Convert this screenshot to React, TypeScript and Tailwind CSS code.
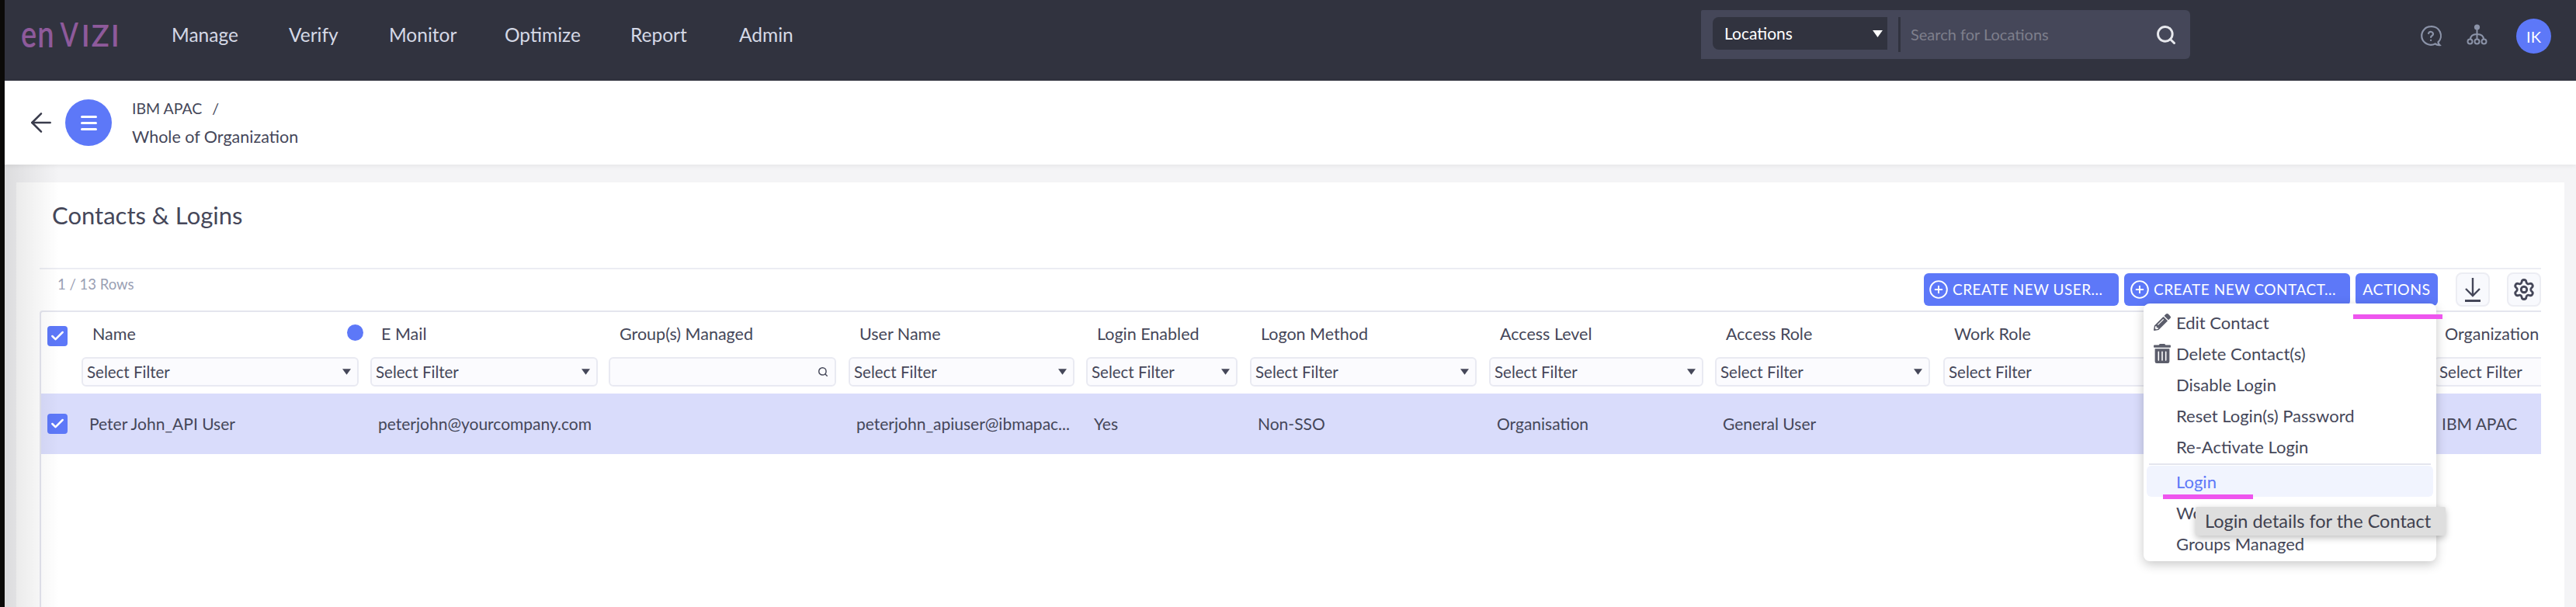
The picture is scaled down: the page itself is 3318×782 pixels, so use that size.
import { ArrowLeft, Check, CirclePlus, Search, Settings } from 'lucide-react';
import { FaPencilAlt, FaTrashAlt } from 'react-icons/fa';

const font = "font-['Lato','Noto_Sans',sans-serif]";

const columns = [
  { label: 'Name', value: 'Peter John_API User', cell: 'w-[372px]', filter: 'w-[357px]' },
  { label: 'E Mail', value: 'peterjohn@yourcompany.com', cell: 'w-[307px]', filter: 'w-[293px]' },
  { label: 'Group(s) Managed', value: '', cell: 'w-[309px]', filter: 'w-[293px]', search: true },
  { label: 'User Name', value: 'peterjohn_apiuser@ibmapac...', cell: 'w-[306px]', filter: 'w-[291px]' },
  { label: 'Login Enabled', value: 'Yes', cell: 'w-[211px]', filter: 'w-[195px]' },
  { label: 'Logon Method', value: 'Non-SSO', cell: 'w-[308px]', filter: 'w-[292px]' },
  { label: 'Access Level', value: 'Organisation', cell: 'w-[291px]', filter: 'w-[276px]' },
  { label: 'Access Role', value: 'General User', cell: 'w-[294px]', filter: 'w-[277px]' },
  { label: 'Work Role', value: '', cell: 'w-[632px]', filter: 'w-[610px]' },
  { label: 'Organization', value: 'IBM APAC', cell: 'w-[138px]', filter: 'w-[138px]', open: true },
];

const navItems = [
  { label: 'Manage', cls: 'w-[151px]' },
  { label: 'Verify', cls: 'w-[129px]' },
  { label: 'Monitor', cls: 'w-[149px]' },
  { label: 'Optimize', cls: 'w-[162px]' },
  { label: 'Report', cls: 'w-[140px]' },
  { label: 'Admin', cls: 'w-[80px]' },
];

function Checkbox() {
  return (
    <span className="flex h-[26px] w-[26px] items-center justify-center rounded-[4px] bg-[#5d78f8]">
      <Check className="h-[20px] w-[20px] text-white" strokeWidth={3} />
    </span>
  );
}

function Caret({ className }: { className: string }) {
  return (
    <svg viewBox="0 0 10 7" className={className}>
      <path d="M0 0h10L5 7z" fill="currentColor" />
    </svg>
  );
}

// speech bubble with question mark, tail sits bottom right
function HelpIcon() {
  return (
    <svg viewBox="0 0 29 29" className="h-[29px] w-[29px] text-[#8b93a8]" fill="none" stroke="currentColor" strokeWidth="2.2" strokeLinecap="round">
      <path d="M14 2.2a11.8 11.8 0 1 0 0 23.6c2.2 0 4-.5 5.6-1.4 1.4 1.2 3 1.9 5.8 1.7-1-1-1.8-2.2-2-3.7a11.8 11.8 0 0 0-9.4-20.2z" />
      <path d="M11 11a3.1 3.1 0 0 1 6 .9c0 2-2.9 2.4-2.9 4" />
      <path d="M14.1 19.8v.1" />
    </svg>
  );
}

// org chart glyph next to the help icon
function OrgIcon() {
  return (
    <svg viewBox="0 0 27 27" className="h-[27px] w-[27px] text-[#8b93a8]" fill="none" stroke="currentColor" strokeWidth="2">
      <circle cx="13.5" cy="4" r="3.6" fill="currentColor" stroke="none" />
      <path d="M13.5 6v14M13.5 13c-6 0-8.500 2.500-8.500 7M13.500 13c6 0 8.500 2.500 8.500 7" />
      <circle cx="4.500" cy="22.500" r="3" />
      <circle cx="13.500" cy="22.500" r="3" />
      <circle cx="22.500" cy="22.500" r="3" />
    </svg>
  );
}

function DownloadIcon() {
  return (
    <svg viewBox="0 0 24 32" className="h-[32px] w-[24px] text-[#454759]" fill="none" stroke="currentColor" strokeWidth="2.4">
      <path d="M12 1v23M3 15l9 9 9-9" />
      <path d="M2 30.500h20" strokeWidth="3" />
    </svg>
  );
}

function MenuRow({ label, icon, hover }: { label: string; icon?: React.ReactNode; hover?: boolean }) {
  return (
    <div className={`mx-[4px] flex h-[40px] items-center rounded-[6px] ${hover ? 'bg-[#f1f4fe] text-[#5d78f8]' : 'text-[#454759]'}`}>
      <span className="flex w-[38px] justify-center pl-[2px]">{icon}</span>
      <span>{label}</span>
    </div>
  );
}

export default function App() {
  return (
    <div className={`relative flex h-[782px] w-[3318px] overflow-hidden bg-[#0b0a08] ${font}`}>
      <div className="ml-[6px] flex min-w-0 flex-1 flex-col bg-[#f4f4f6]">
        {/* top nav */}
        <div className="flex h-[104px] shrink-0 items-start bg-[#31333f]">
          <div className="mt-[20px] ml-[21px] flex h-[50px] w-[194px] items-baseline text-[38px] leading-[50px] font-semibold text-[#8e5a9b]">
            <span className="inline-block origin-[0_38px] scale-y-125 tracking-[1px]">en</span>
            <span className="ml-[7px] inline-block origin-[0_38px] scale-y-125 text-[34px]">V</span>
            <span className="ml-[4px] tracking-[2px]">IZI</span>
          </div>
          <div className="mt-[31px] flex text-[24.5px] leading-[28px] text-[#d5d9e6]">
            {navItems.map((n) => (
              <span key={n.label} className={n.cls}>
                {n.label}
              </span>
            ))}
          </div>
          <div className="mt-[13px] ml-[1159px] flex h-[63px] w-[630px] items-start rounded-r-[6px] rounded-tl-[2px] bg-[#454759] pt-[9px] pl-[15px]">
            <div className="flex h-[42px] w-[225px] items-center justify-between rounded-l-[8px] bg-[#31333f] pr-[6px] pl-[15px] text-[21px] text-white">
              Locations
              <Caret className="h-[9px] w-[13px]" />
            </div>
            <div className="ml-[14px] h-[45px] w-[3px] bg-[#31333f]" />
            <span className="mt-[9px] ml-[13px] w-[315px] text-[20px] leading-[26px] text-[#7e7f8c]">Search for Locations</span>
            <Search className="mt-[9px] h-[28px] w-[28px] text-[#e8e9ee]" strokeWidth={2.5} />
          </div>
          <div className="mt-[32px] ml-[296px]">
            <HelpIcon />
          </div>
          <div className="mt-[31px] ml-[31px]">
            <OrgIcon />
          </div>
          <div className="mt-[24px] ml-[37px] flex h-[45px] w-[45px] items-center justify-center rounded-full bg-[#5d78f8] text-[20px] text-white">
            IK
          </div>
        </div>

        {/* breadcrumb */}
        <div className="z-10 flex h-[108px] shrink-0 items-center bg-white pl-[27px] shadow-[0_2px_6px_rgba(0,0,0,0.06)]">
          <ArrowLeft className="h-[40px] w-[40px] text-[#3a3c4c]" strokeWidth={1.5} />
          <span className="ml-[11px] flex h-[60px] w-[60px] flex-col items-center justify-center gap-[5px] rounded-full bg-[#5d78f8]">
            <span className="h-[3px] w-[21px] rounded-full bg-white" />
            <span className="h-[3px] w-[21px] rounded-full bg-white" />
            <span className="h-[3px] w-[21px] rounded-full bg-white" />
          </span>
          <div className="ml-[26px] flex flex-col gap-[14px] text-[21.500px] leading-[23px] text-[#454759]">
            <span className="text-[19.500px]">
              IBM APAC <span className="ml-[8px]">/</span>
            </span>
            <span>Whole of Organization</span>
          </div>
        </div>

        {/* content card */}
        <div className="min-h-0 flex-1 pt-[23px] pr-[15px] pl-[15px]">
          <div className="h-full bg-white pt-[24px] pl-[30px]">
            <h1 className="pl-[16px] text-[31px] leading-[36px] font-normal text-[#454759]">Contacts &amp; Logins</h1>
            <div className="mt-[50px] flex h-[55px] w-[3222px] items-start border-t-2 border-[#ecedf3]">
              <span className="mt-[8px] pl-[23px] text-[18.500px] leading-[22px] text-[#9aa0b4]">1 / 13 Rows</span>
              <div className="ml-auto flex pt-[5px]">
                <button className="flex h-[42px] w-[251px] items-center gap-[5px] rounded-[6px] bg-[#5d78f8] pl-[6px] text-[19px] tracking-[0.5px] text-white">
                  <CirclePlus className="h-[26px] w-[26px]" strokeWidth={1.75} />
                  CREATE NEW USER...
                </button>
                <button className="ml-[7px] flex h-[42px] w-[291px] items-center gap-[5px] rounded-[6px] bg-[#5d78f8] pl-[7px] text-[19px] tracking-[0.5px] text-white">
                  <CirclePlus className="h-[26px] w-[26px]" strokeWidth={1.75} />
                  CREATE NEW CONTACT...
                </button>
                <button className="ml-[7px] h-[42px] w-[106px] rounded-[6px] bg-[#5d78f8] text-[19.500px] tracking-[0.5px] text-white">ACTIONS</button>
                <span className="-mt-[1px] ml-[23px] flex h-[44px] w-[44px] items-center justify-center rounded-[8px] border-2 border-[#ecedf3] bg-[#f8f9fd]">
                  <DownloadIcon />
                </span>
                <span className="-mt-[1px] ml-[22px] flex h-[44px] w-[44px] items-center justify-center rounded-[8px] border-2 border-[#ecedf3] bg-[#f8f9fd]">
                  <Settings className="h-[30px] w-[30px] text-[#454759]" strokeWidth={2.25} />
                </span>
              </div>
            </div>

            {/* grid */}
            <div className="h-[500px] w-[3222px] rounded-tl-[4px] border-t-2 border-l-2 border-[#e4e5ee] text-[21px] text-[#454759]">
              <div className="flex h-[105px]">
                <div className="w-[52px] pt-[18px] pl-[8px]">
                  <Checkbox />
                </div>
                {columns.map((c) => (
                  <div key={c.label} className={`flex flex-col ${c.cell}`}>
                    <div className="flex h-[58px] items-start pt-[15px] pl-[14px] text-[21.500px] leading-[26px]">
                      {c.label}
                      {c.label === 'Name' && <span className="mt-[1px] mr-[9px] ml-auto h-[21px] w-[21px] rounded-full bg-[#5d78f8]" />}
                    </div>
                    <div
                      className={`flex h-[38px] items-center justify-between border-2 border-[#e9eaf2] bg-[#fbfbfe] pr-[8px] pl-[5px] text-[20.500px] ${c.filter} ${
                        c.open ? 'rounded-l-[6px] border-r-0' : 'rounded-[6px]'
                      }`}
                    >
                      {!c.search && <span>Select Filter</span>}
                      {c.search ? (
                        <Search className="ml-auto h-[14px] w-[14px] text-[#454759]" strokeWidth={2.5} />
                      ) : (
                        !c.open && <Caret className="h-[8px] w-[11px] text-[#454759]" />
                      )}
                    </div>
                  </div>
                ))}
              </div>
              <div className="flex h-[78px] items-center bg-[#d9dcfb]">
                <div className="w-[52px] pl-[8px]">
                  <Checkbox />
                </div>
                {columns.map((c) => (
                  <div key={c.label} className={`truncate pl-[10px] ${c.cell}`}>
                    {c.value}
                  </div>
                ))}
              </div>
            </div>
          </div>
        </div>
      </div>

      {/* soft shadow falling off the left edge */}
      <div className="pointer-events-none absolute top-[104px] bottom-0 left-[6px] w-[70px] bg-gradient-to-r from-black/10 to-transparent" />

      {/* actions dropdown */}
      <div className="absolute top-[391px] left-[2761px] h-[332px] w-[377px] rounded-[8px] bg-white pt-[4px] text-[22px] shadow-[0_4px_14px_rgba(0,0,0,0.22)]">
        <MenuRow label="Edit Contact" icon={<FaPencilAlt className="h-[22px] w-[22px] text-[#5b5d6b]" />} />
        <MenuRow label="Delete Contact(s)" icon={<FaTrashAlt className="h-[25px] w-[22px] text-[#5b5d6b]" />} />
        <MenuRow label="Disable Login" />
        <MenuRow label="Reset Login(s) Password" />
        <MenuRow label="Re-Activate Login" />
        <div className="mx-[7px] mt-[2px] mb-[1px] h-[2px] bg-[#e4e5ee]" />
        <MenuRow label="Login" hover />
        <MenuRow label="Work Roles" />
        <MenuRow label="Groups Managed" />
      </div>

      {/* tooltip */}
      <div className="absolute top-[653px] left-[2828px] flex h-[37px] w-[322px] items-center rounded-[2px] bg-[#dedede] pl-[12px] text-[23.500px] text-[#3f414f] shadow-[0_3px_8px_rgba(0,0,0,0.25)]">
        Login details for the Contact
      </div>

      {/* magenta annotation marks */}
      <div className="absolute top-[405px] left-[3031px] h-[6px] w-[115px] bg-[#ee55ee]" />
      <div className="absolute top-[637px] left-[2786px] h-[6px] w-[116px] bg-[#ee55ee]" />
    </div>
  );
}
